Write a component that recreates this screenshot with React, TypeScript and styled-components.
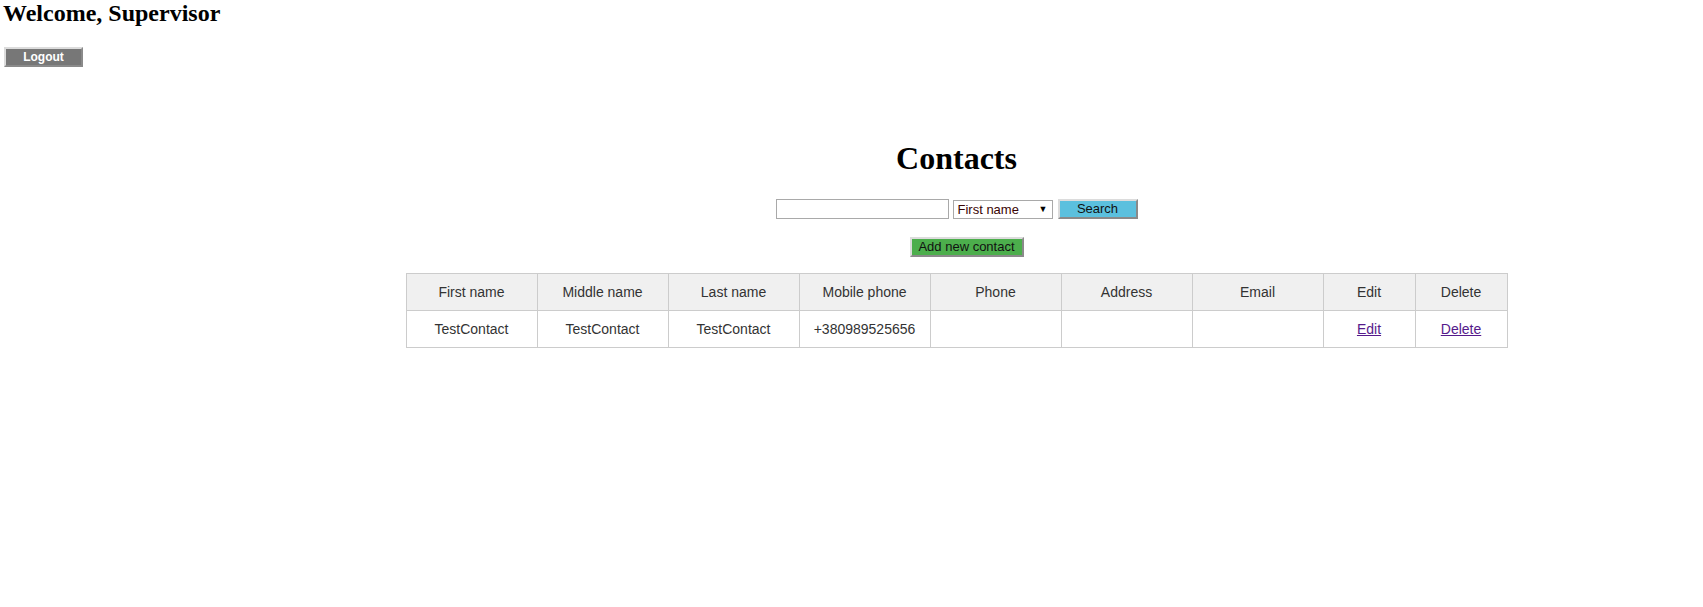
import styled, { createGlobalStyle } from 'styled-components'

const GlobalStyle = createGlobalStyle`
  html, body {
    margin: 0;
    padding: 0;
    background: #fff;
  }
  body {
    font-family: "Liberation Serif", "Times New Roman", serif;
    color: #000;
  }
`

const contacts = [
  {
    firstName: 'TestContact',
    middleName: 'TestContact',
    lastName: 'TestContact',
    mobile: '+380989525656',
    phone: '',
    address: '',
    email: '',
  },
]

const columns = [
  { title: 'First name', width: 130 },
  { title: 'Middle name', width: 130 },
  { title: 'Last name', width: 130 },
  { title: 'Mobile phone', width: 130 },
  { title: 'Phone', width: 130 },
  { title: 'Address', width: 130 },
  { title: 'Email', width: 130 },
  { title: 'Edit', width: 91 },
  { title: 'Delete', width: 91 },
]

const Header = styled.header`
  padding: 0 3px;
`

const Welcome = styled.h2`
  margin: 0 0 20px;
  font-size: 24px;
  line-height: 27px;
  font-weight: bold;
`

const RaisedButton = styled.button<{ $bg: string; $color?: string; $bold?: boolean }>`
  box-sizing: border-box;
  height: 20px;
  padding: 0 6px;
  border-style: solid;
  border-width: 2px;
  border-color: #dcdcdc #8a8a8a #8a8a8a #dcdcdc;
  background: ${(p) => p.$bg};
  color: ${(p) => p.$color ?? '#111'};
  font-family: "Liberation Sans", Arial, sans-serif;
  font-size: ${(p) => (p.$bold ? '12px' : '13px')};
  font-weight: ${(p) => (p.$bold ? 'bold' : 'normal')};
  line-height: 16px;
  cursor: pointer;
`

const LogoutButton = styled(RaisedButton)`
  display: block;
  width: 79px;
  margin-left: 1px;
`

/* the original page was centred in a wider window; the left pad keeps
   the centre line at the same place inside this frame */
const Main = styled.main`
  box-sizing: border-box;
  width: 100%;
  padding-left: 210px;
  margin-top: 73px;
  display: flex;
  flex-direction: column;
  align-items: center;
`

const Title = styled.h1`
  margin: 0 0 23px;
  font-size: 32px;
  line-height: 36px;
  font-weight: bold;
`

const SearchForm = styled.form`
  display: flex;
  align-items: center;
  gap: 4px;
  height: 20px;
  margin: 0 0 18px;
`

const SearchInput = styled.input`
  box-sizing: border-box;
  width: 173px;
  height: 20px;
  margin: 0;
  padding: 1px 3px;
  border: 1px solid #a9a9a9;
  font-family: "Liberation Sans", Arial, sans-serif;
  font-size: 13px;
`

const SelectWrap = styled.div`
  position: relative;
  width: 100px;
  height: 19px;
`

const Select = styled.select`
  box-sizing: border-box;
  width: 100%;
  height: 19px;
  margin: 0;
  padding: 0 16px 0 4px;
  border: 1px solid #a9a9a9;
  background: #fff;
  color: #3a0505;
  font-family: "Liberation Sans", Arial, sans-serif;
  font-size: 13px;
  appearance: none;
  border-radius: 0;
`

const Arrow = styled.span`
  position: absolute;
  right: 5px;
  top: 3px;
  font-size: 9px;
  line-height: 12px;
  color: #000;
  pointer-events: none;
`

const SearchButton = styled(RaisedButton)`
  width: 80px;
  margin-left: 1px;
`

const AddButton = styled(RaisedButton)`
  width: 114px;
  margin: 0 0 16px 20px;
  padding: 0;
`

const Table = styled.table`
  table-layout: fixed;
  width: 1102px;
  border-collapse: collapse;
  border: 1px solid #ccc;
  font-family: "Liberation Sans", Arial, sans-serif;
  font-size: 14px;
  color: #333;
`

const Th = styled.th<{ $w: number }>`
  width: ${(p) => p.$w}px;
  padding: 10px 0;
  border: 1px solid #ccc;
  background: #f0f0f0;
  font-weight: normal;
  line-height: 16px;
  text-align: center;
`

const Td = styled.td`
  height: 16px;
  padding: 10px 0;
  border: 1px solid #ccc;
  line-height: 16px;
  text-align: center;
`

const ActionLink = styled.a`
  color: #551a8b;
  text-decoration: underline;
`

export default function App() {
  return (
    <>
      <GlobalStyle />
      <Header>
        <Welcome>Welcome, Supervisor</Welcome>
        <LogoutButton $bg="#777777" $color="#fff" $bold>
          Logout
        </LogoutButton>
      </Header>
      <Main>
        <Title>Contacts</Title>
        <SearchForm onSubmit={(e) => e.preventDefault()}>
          <SearchInput type="text" />
          <SelectWrap>
            <Select defaultValue="firstName">
              <option value="firstName">First name</option>
              <option value="middleName">Middle name</option>
              <option value="lastName">Last name</option>
            </Select>
            <Arrow>▼</Arrow>
          </SelectWrap>
          <SearchButton $bg="#5bc0de" type="submit">
            Search
          </SearchButton>
        </SearchForm>
        <AddButton $bg="#4cae4c">Add new contact</AddButton>
        <Table>
          <thead>
            <tr>
              {columns.map((c) => (
                <Th key={c.title} $w={c.width}>
                  {c.title}
                </Th>
              ))}
            </tr>
          </thead>
          <tbody>
            {contacts.map((c, i) => (
              <tr key={i}>
                <Td>{c.firstName}</Td>
                <Td>{c.middleName}</Td>
                <Td>{c.lastName}</Td>
                <Td>{c.mobile}</Td>
                <Td>{c.phone}</Td>
                <Td>{c.address}</Td>
                <Td>{c.email}</Td>
                <Td>
                  <ActionLink href="#">Edit</ActionLink>
                </Td>
                <Td>
                  <ActionLink href="#">Delete</ActionLink>
                </Td>
              </tr>
            ))}
          </tbody>
        </Table>
      </Main>
    </>
  )
}
